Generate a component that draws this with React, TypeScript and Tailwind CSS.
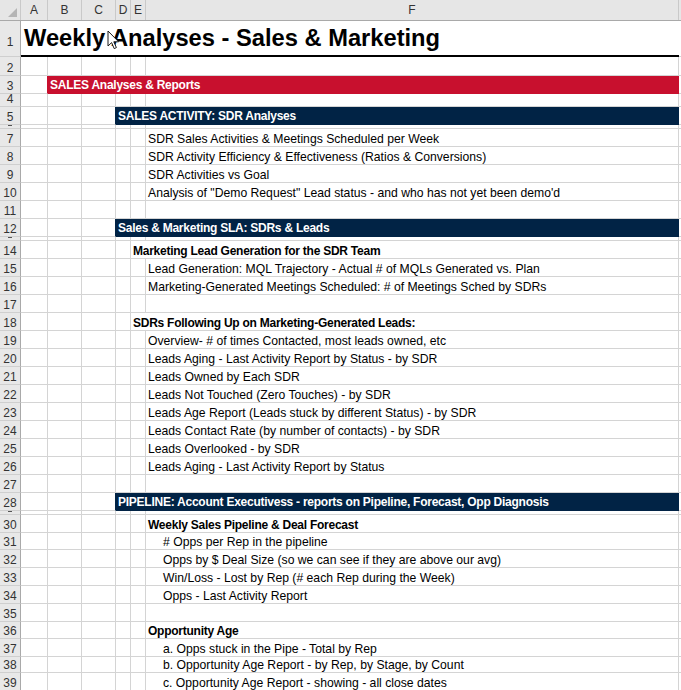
import React from 'react'

type Col = 'A' | 'B' | 'C' | 'D' | 'E' | 'F'

interface SheetRow {
  n: number
  h: string
  from?: Col
  text?: string
  bold?: boolean
  indent?: boolean
  band?: 'red' | 'navy'
  title?: boolean
  tiny?: boolean
}

const cols: Col[] = ['A', 'B', 'C', 'D', 'E', 'F']

const colWidth: Record<Col, string> = {
  A: 'w-[27px]',
  B: 'w-[34px]',
  C: 'w-[34px]',
  D: 'w-[15px]',
  E: 'w-[15px]',
  F: 'w-[533px]',
}

// width of a cell that runs from this column to the end of F
const spanWidth: Record<Col, string> = {
  A: 'w-[658px]',
  B: 'w-[631px]',
  C: 'w-[597px]',
  D: 'w-[563px]',
  E: 'w-[548px]',
  F: 'w-[533px]',
}

const rows: SheetRow[] = [
  { n: 1, h: 'h-[36px]', title: true, from: 'A', text: 'Weekly Analyses - Sales & Marketing' },
  { n: 2, h: 'h-[19px]' },
  { n: 3, h: 'h-[18px]', band: 'red', from: 'B', text: 'SALES Analyses & Reports' },
  { n: 4, h: 'h-[13px]' },
  { n: 5, h: 'h-[18px]', band: 'navy', from: 'D', text: 'SALES ACTIVITY: SDR Analyses' },
  { n: 6, h: 'h-[4px]', tiny: true },
  { n: 7, h: 'h-[18px]', from: 'F', text: 'SDR Sales Activities & Meetings Scheduled per Week' },
  { n: 8, h: 'h-[18px]', from: 'F', text: 'SDR Activity Efficiency & Effectiveness (Ratios & Conversions)' },
  { n: 9, h: 'h-[18px]', from: 'F', text: 'SDR Activities vs Goal' },
  { n: 10, h: 'h-[18px]', from: 'F', text: 'Analysis of "Demo Request" Lead status - and who has not yet been demo\'d' },
  { n: 11, h: 'h-[18px]' },
  { n: 12, h: 'h-[18px]', band: 'navy', from: 'D', text: 'Sales & Marketing SLA: SDRs & Leads' },
  { n: 13, h: 'h-[4px]', tiny: true },
  { n: 14, h: 'h-[18px]', from: 'E', bold: true, text: 'Marketing Lead Generation for the SDR Team' },
  { n: 15, h: 'h-[18px]', from: 'F', text: 'Lead Generation: MQL Trajectory - Actual # of MQLs Generated vs. Plan' },
  { n: 16, h: 'h-[18px]', from: 'F', text: 'Marketing-Generated Meetings Scheduled: # of Meetings Sched by SDRs' },
  { n: 17, h: 'h-[18px]' },
  { n: 18, h: 'h-[18px]', from: 'E', bold: true, text: 'SDRs Following Up on Marketing-Generated Leads:' },
  { n: 19, h: 'h-[18px]', from: 'F', text: 'Overview- # of times Contacted, most leads owned, etc' },
  { n: 20, h: 'h-[18px]', from: 'F', text: 'Leads Aging - Last Activity Report by Status - by SDR' },
  { n: 21, h: 'h-[18px]', from: 'F', text: 'Leads Owned by Each SDR' },
  { n: 22, h: 'h-[18px]', from: 'F', text: 'Leads Not Touched (Zero Touches) - by SDR' },
  { n: 23, h: 'h-[18px]', from: 'F', text: 'Leads Age Report (Leads stuck by different Status) - by SDR' },
  { n: 24, h: 'h-[18px]', from: 'F', text: 'Leads Contact Rate (by number of contacts) - by SDR' },
  { n: 25, h: 'h-[18px]', from: 'F', text: 'Leads Overlooked - by SDR' },
  { n: 26, h: 'h-[18px]', from: 'F', text: 'Leads Aging - Last Activity Report  by Status' },
  { n: 27, h: 'h-[18px]' },
  { n: 28, h: 'h-[18px]', band: 'navy', from: 'D', text: 'PIPELINE: Account Executivess - reports on Pipeline, Forecast, Opp Diagnosis' },
  { n: 29, h: 'h-[4px]', tiny: true },
  { n: 30, h: 'h-[18px]', from: 'F', bold: true, text: 'Weekly Sales Pipeline & Deal Forecast' },
  { n: 31, h: 'h-[17px]', from: 'F', indent: true, text: '# Opps per Rep in the pipeline' },
  { n: 32, h: 'h-[18px]', from: 'F', indent: true, text: 'Opps by $ Deal Size (so we can see if they are above our avg)' },
  { n: 33, h: 'h-[18px]', from: 'F', indent: true, text: 'Win/Loss - Lost by Rep (# each Rep during the Week)' },
  { n: 34, h: 'h-[18px]', from: 'F', indent: true, text: 'Opps - Last Activity Report' },
  { n: 35, h: 'h-[18px]' },
  { n: 36, h: 'h-[17px]', from: 'F', bold: true, text: 'Opportunity Age' },
  { n: 37, h: 'h-[18px]', from: 'F', indent: true, text: 'a. Opps stuck in the Pipe - Total by Rep' },
  { n: 38, h: 'h-[16px]', from: 'F', indent: true, text: 'b. Opportunity Age Report - by Rep, by Stage, by Count' },
  { n: 39, h: 'h-[18px]', from: 'F', indent: true, text: 'c. Opportunity Age Report - showing - all close dates' },
]

const grid = 'border-r border-b border-[#d4d4d4]'

function Cursor() {
  return (
    <svg className="absolute left-[107px] top-[30px]" width="13" height="20" viewBox="0 0 13 20">
      <path
        d="M1 1 L1 16 L4.6 12.6 L7.2 18.6 L9.4 17.6 L6.8 11.8 L11.6 11.8 Z"
        fill="#ffffff"
        stroke="#1a1a1a"
        strokeWidth="1"
        strokeLinejoin="round"
      />
    </svg>
  )
}

function RowHead({ r }: { r: SheetRow }) {
  if (r.tiny) {
    // hidden-ish row: only a sliver of the number shows
    return (
      <div className={`${r.h} w-[21px] shrink-0 flex justify-center items-start bg-[#e8e8e8] border-r border-r-[#a9a9a9] border-b border-b-[#cfcfcf]`}>
        <div className="w-[4px] h-px bg-[#555]" />
      </div>
    )
  }
  return (
    <div
      className={`${r.h} w-[21px] shrink-0 flex justify-center bg-[#e8e8e8] border-r border-r-[#a9a9a9] border-b border-b-[#cfcfcf] text-[#333] text-[12px] leading-[11px] ${
        r.title ? 'items-end pb-[8px]' : 'items-end pb-[1px]'
      }`}
    >
      {r.n}
    </div>
  )
}

function Row({ r }: { r: SheetRow }) {
  const start = r.from ? cols.indexOf(r.from) : cols.length
  const before = cols.slice(0, start)

  return (
    <div className="flex">
      <RowHead r={r} />
      {before.map((c, i) => (
        <div
          key={c}
          className={`${r.h} ${colWidth[c]} shrink-0 ${grid} ${
            i === before.length - 1 && r.band === 'red'
              ? 'border-r-[#c8102e]'
              : i === before.length - 1 && r.band === 'navy'
              ? 'border-r-[#012345]'
              : ''
          }`}
        />
      ))}

      {r.from && r.title && (
        <div
          className={`${r.h} ${spanWidth[r.from]} shrink-0 flex items-end pl-[3px] pb-[4px] border-b-2 border-black`}
        >
          <span className="text-[23.7px] leading-[23.7px] font-bold text-black whitespace-nowrap">
            {r.text}
          </span>
        </div>
      )}

      {r.from && r.band && (
        <div
          className={`${r.h} ${spanWidth[r.from]} shrink-0 flex items-center pl-[2px] ${
            r.band === 'red' ? 'bg-[#c8102e]' : 'bg-[#012345]'
          }`}
        >
          <span className="text-[12px] tracking-[-0.25px] leading-[14px] font-bold text-white whitespace-nowrap">
            {r.text}
          </span>
        </div>
      )}

      {r.from && !r.title && !r.band && (
        <div
          className={`${r.h} ${spanWidth[r.from]} shrink-0 flex items-end ${grid} ${
            r.indent ? 'pl-[17px]' : 'pl-[2px]'
          }`}
        >
          <span
            className={`leading-[14px] text-black whitespace-nowrap ${
              r.bold ? 'font-bold text-[12px] tracking-[-0.25px]' : 'text-[12.2px]'
            }`}
          >
            {r.text}
          </span>
        </div>
      )}

      <div className={`${r.h} flex-1 border-b border-[#d4d4d4]`} />
    </div>
  )
}

function ColumnHeader() {
  return (
    <div className="flex h-[21px] bg-[#e6e6e6] border-b border-[#a9a9a9]">
      <div className="relative w-[21px] shrink-0 border-r border-[#c9c9c9]">
        <svg className="absolute right-[3px] bottom-[3px]" width="9" height="9" viewBox="0 0 9 9">
          <path d="M9 0 L9 9 L0 9 Z" fill="#b5b5b5" />
        </svg>
      </div>
      {cols.map((c) => (
        <div
          key={c}
          className={`${colWidth[c]} shrink-0 flex items-center justify-center border-r border-[#c9c9c9] text-[12px] text-[#333]`}
        >
          {c}
        </div>
      ))}
      <div className="flex-1" />
    </div>
  )
}

export default function App() {
  return (
    <div className="relative w-[681px] h-[690px] overflow-hidden bg-white font-['Liberation_Sans',Arial,sans-serif]">
      <ColumnHeader />
      {rows.map((r) => (
        <Row key={r.n} r={r} />
      ))}
      <Cursor />
    </div>
  )
}
